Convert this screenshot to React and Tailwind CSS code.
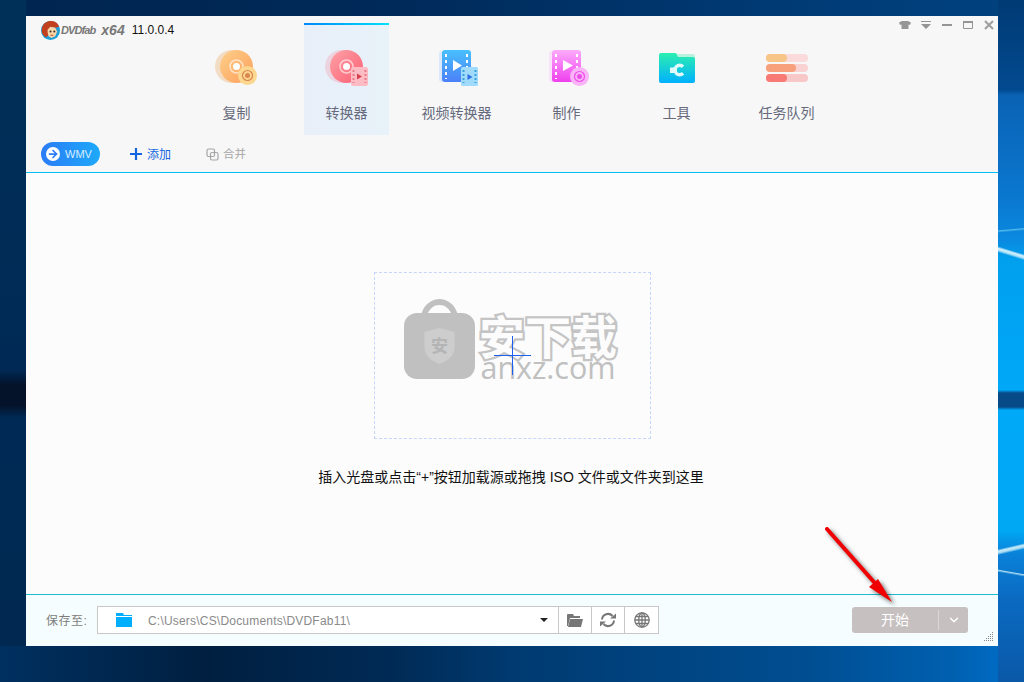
import React from 'react';
import { ChevronDown, ArrowRight } from 'lucide-react';

const cjk = { fontFamily: '"Liberation Sans", "Noto Sans CJK SC", sans-serif' };

const CopyIcon = () => (
  <svg width="48" height="40" viewBox="-2.500 -1 48 40" className="shrink-0">
    <defs>
      <linearGradient id="cp" x1="0" y1="0" x2="1" y2="1"><stop offset="0" stopColor="#fdd08a" /><stop offset="1" stopColor="#fd9f5c" /></linearGradient>
    </defs>
    <circle cx="17" cy="16.500" r="16.500" fill="#f3dcc4" />
    <circle cx="22" cy="16.500" r="16.500" fill="url(#cp)" />
    <circle cx="22" cy="16.500" r="6.500" fill="none" stroke="#fff" strokeOpacity="0.6" strokeWidth="1.500" />
    <circle cx="22" cy="16.500" r="3.500" fill="#fff" />
    <circle cx="33" cy="25.500" r="9.500" fill="#fcd78f" />
    <circle cx="33" cy="25.500" r="5" fill="none" stroke="#d9874e" strokeWidth="1.200" />
    <circle cx="33" cy="25.500" r="2.500" fill="#d9874e" />
  </svg>
);

const ConvertIcon = () => (
  <svg width="48" height="40" viewBox="-2.500 -1 48 40" className="shrink-0">
    <defs>
      <linearGradient id="cv" x1="0" y1="0" x2="1" y2="1"><stop offset="0" stopColor="#fea2a8" /><stop offset="1" stopColor="#fb5f72" /></linearGradient>
    </defs>
    <circle cx="17" cy="16.500" r="16.500" fill="#ecd3e0" />
    <circle cx="22" cy="16.500" r="16.500" fill="url(#cv)" />
    <circle cx="22" cy="16.500" r="6.500" fill="none" stroke="#fff" strokeOpacity="0.6" strokeWidth="1.500" />
    <circle cx="22" cy="16.500" r="3.500" fill="#fff" />
    <rect x="26.500" y="17" width="17" height="19" rx="2" fill="#fdbcc4" />
    <path d="M32.500 23.500l5 3-5 3z" fill="#d8404f" />
    <path d="M29 20v13M41 20v13" stroke="#ea7a88" strokeWidth="2" strokeDasharray="2 2" />
  </svg>
);

const VideoIcon = () => (
  <svg width="48" height="40" viewBox="-6 -1 48 40" className="shrink-0">
    <defs>
      <linearGradient id="vd" x1="0" y1="0" x2="0" y2="1"><stop offset="0" stopColor="#48c0fd" /><stop offset="1" stopColor="#4b80f8" /></linearGradient>
    </defs>
    <rect x="1" y="1" width="26" height="31" rx="3" fill="#dbe8fb" />
    <rect x="4" y="0" width="29" height="32" rx="3" fill="url(#vd)" />
    <path d="M8 4v25M29 4v25" stroke="#fff" strokeWidth="2" strokeDasharray="3 3" />
    <path d="M15 10l9 5.500-9 5.500z" fill="#fff" />
    <rect x="23" y="17" width="17" height="19" rx="1.500" fill="#a0dbfb" />
    <path d="M29.500 24l5 3-5 3z" fill="#2f6ee0" />
    <path d="M25.500 20v13M37.500 20v13" stroke="#3aa0dc" strokeWidth="2" strokeDasharray="2 2" />
  </svg>
);

const MakeIcon = () => (
  <svg width="48" height="40" viewBox="-7 -1 48 40" className="shrink-0">
    <defs>
      <linearGradient id="mk" x1="0" y1="0" x2="0" y2="1"><stop offset="0" stopColor="#fdabfb" /><stop offset="1" stopColor="#ee40ee" /></linearGradient>
    </defs>
    <rect x="0" y="1" width="26" height="31" rx="3" fill="#f8e2f8" />
    <rect x="3" y="0" width="29" height="32" rx="3" fill="url(#mk)" />
    <path d="M7 4v25M28 4v25" stroke="#fff" strokeWidth="2" strokeDasharray="3 3" />
    <path d="M14 10l10 5.500-10 5.500z" fill="#fff" />
    <circle cx="30.500" cy="26.500" r="9.500" fill="#f9b4f7" />
    <circle cx="30.500" cy="26.500" r="5" fill="none" stroke="#ec4fe8" strokeWidth="1.200" />
    <circle cx="30.500" cy="26.500" r="2.500" fill="#ec4fe8" />
  </svg>
);

const ToolIcon = () => (
  <svg width="48" height="40" viewBox="-6 -3 48 40" className="shrink-0">
    <defs>
      <linearGradient id="tl" x1="0" y1="0" x2="0" y2="1"><stop offset="0" stopColor="#2cefb0" /><stop offset="1" stopColor="#00b0fd" /></linearGradient>
    </defs>
    <path d="M17 2h18a2 2 0 0 1 2 2v4H17z" fill="#b8f2dc" />
    <path d="M1 3a2 2 0 0 1 2-2h14a2 2 0 0 1 2 2l1 2h15a2 2 0 0 1 2 2v22a2 2 0 0 1-2 2H3a2 2 0 0 1-2-2z" fill="url(#tl)" />
    <rect x="12" y="15.500" width="7" height="5.500" fill="#e0fafc" />
    <path d="M25 14.700A4.700 4.700 0 1 0 25 21.300" fill="none" stroke="#e0fafc" strokeWidth="3.400" />
  </svg>
);

const QueueIcon = () => (
  <svg width="48" height="40" viewBox="0 -1 48 40" className="shrink-0">
    <rect x="4" y="4" width="42" height="8" rx="4" fill="#fadada" />
    <rect x="4" y="4" width="21" height="8" rx="4" fill="#f6c587" />
    <rect x="4" y="14" width="42" height="8" rx="4" fill="#f9d2d2" />
    <rect x="4" y="14" width="30" height="8" rx="4" fill="#f8a07c" />
    <rect x="4" y="24" width="42" height="8" rx="4" fill="#f8c8c8" />
    <rect x="4" y="24" width="21" height="8" rx="4" fill="#f87a74" />
  </svg>
);

const tabs = [
  { label: '复制', icon: CopyIcon },
  { label: '转换器', icon: ConvertIcon, active: true },
  { label: '视频转换器', icon: VideoIcon },
  { label: '制作', icon: MakeIcon },
  { label: '工具', icon: ToolIcon },
  { label: '任务队列', icon: QueueIcon },
];

const Logo = () => (
  <svg width="19" height="19" viewBox="0 0 20 20" className="shrink-0">
    <circle cx="10" cy="10" r="10" fill="#1c9fd8" />
    <path d="M1 12C0 6 3 1 9 0c5-.5 9 2 10 6l-4 1-5-1-3 4 1 5-3 2c-2-1-3-3-4-5z" fill="#c2401e" />
    <path d="M7 9l3-3 5 1 2 4-2 5-4 2-3-2-1-4z" fill="#fbd5a8" />
    <circle cx="10" cy="11" r="1.100" fill="#333" />
    <circle cx="14" cy="11" r="1.100" fill="#333" />
    <path d="M10 15h3" stroke="#b8452a" />
  </svg>
);

const WinControls = () => (
  <div className="flex items-start gap-[7px] pt-[3px]">
    <svg width="14" height="12" viewBox="0 0 14 12"><path d="M4 2h6l3 1.500L12 6l-1.500-.5V10h-7V5.500L2 6 1 3.500z" fill="#959595" /></svg>
    <svg width="14" height="12" viewBox="0 0 14 12"><path d="M2 2h10v1H2zM2 5h10L7 10z" fill="#959595" /></svg>
    <svg width="14" height="12" viewBox="0 0 14 12"><rect x="2" y="5" width="10" height="2" fill="#959595" /></svg>
    <svg width="14" height="12" viewBox="0 0 14 12"><path d="M2.500 2.500h9v7h-9z" fill="none" stroke="#959595" /><rect x="2" y="2" width="10" height="2" fill="#959595" /></svg>
    <svg width="14" height="12" viewBox="0 0 14 12"><path d="M3 2l8 8M11 2l-8 8" stroke="#a0a0a0" strokeWidth="2.200" /></svg>
  </div>
);

const Watermark = () => (
  <div className="absolute left-[29px] top-[26px] flex items-start gap-[4px] pointer-events-none">
    <svg width="71" height="80" viewBox="0 0 71 80" className="shrink-0">
      <path d="M17 16C20 5 28 0 35.500 0S51 5 54 16h-6c-3-7-7-10-12.500-10S26 9 23 16z" fill="#c0c0c0" />
      <rect x="0" y="14" width="71" height="66" rx="13" fill="#c0c0c0" />
      <path d="M35.500 29l15 4v15c0 9-7 14-15 17-8-3-15-8-15-17V33z" fill="#cdcdcd" />
      <text x="35.500" y="53" textAnchor="middle" fontSize="17" fontWeight="700" fill="#b4b4b4" fontFamily="Noto Sans CJK SC">安</text>
    </svg>
    <div className="flex flex-col items-center pt-[10px]">
      <div className="text-[46px] leading-[50px] font-bold text-[#fcfcfc] [-webkit-text-stroke:4.500px_#c4c4c4] [paint-order:stroke_fill] whitespace-nowrap" style={{ fontFamily: '"Noto Sans CJK SC", sans-serif' }}>安下载</div>
      <div className="text-[30.500px] leading-[24px] -mt-[4px] text-[#c0c0c0] whitespace-nowrap" style={{ fontFamily: '"Open Sans", sans-serif' }}>anxz.com</div>
    </div>
  </div>
);

export default function App() {
  return (
    <div
      className="relative w-[1024px] h-[682px] overflow-hidden pt-[16px] pl-[26px] [background:linear-gradient(197deg,transparent_0,transparent_243px,#d6f0fb_245px,#a8e0f8_247px,transparent_249px,transparent_100%)_right_top/26px_100%_no-repeat,linear-gradient(175deg,transparent_0,transparent_229px,#50b8ec_230px,transparent_232px,transparent_100%)_right_top/26px_100%_no-repeat,linear-gradient(167deg,transparent_0,transparent_535px,#c8ecf8_537px,#a0d8f4_539px,transparent_541px,transparent_100%)_right_top/26px_100%_no-repeat,linear-gradient(190deg,transparent_0,transparent_565px,#a8dcf4_566px,transparent_568px,transparent_100%)_right_top/26px_100%_no-repeat,linear-gradient(180deg,#013a74_0,#024a90_90px,#0a62b4_95px,#0a78d0_200px,#0a8ae0_240px,#00a0ee_260px,#00a8f8_390px,#064a88_393px,#064a88_407px,#00a8f8_410px,#00a8f4_530px,#0a80d8_555px,#0a6ac0_600px,#0a58a8_100%)_right_top/26px_100%_no-repeat,linear-gradient(90deg,#003060_0,#001f40_20%,#002a55_38%,#003a70_50%,#004d90_78%,#0060b0_93%,#0070cc_100%)_left_bottom/100%_36px_no-repeat,linear-gradient(180deg,#003058_0,#002a55_370px,#04122a_385px,#04122a_405px,#002a55_418px,#002850_100%)_left_top/26px_100%_no-repeat,linear-gradient(90deg,#00254f_0,#002a5a_40%,#003a74_75%,#00427f_100%)]"
      style={cjk}
    >
      <div className="w-[972px] h-[630px] flex flex-col bg-[#fcfcfc]">
        {/* Header */}
        <div className="h-[157px] shrink-0 bg-[#f7f7f7] border-b border-[#00c0f4] flex flex-col">
          <div className="flex h-[119px]">
            <div className="w-[168px] shrink-0 pl-[15px] pt-[5px] flex items-start">
              <div className="flex items-center h-[19px]">
                <Logo />
                <span className="text-[11px] font-bold italic text-[#777] ml-[1px] tracking-[-0.9px]">DVDfab</span>
                <span className="text-[14px] font-bold italic text-[#777] ml-[6px] -mt-[1px]">x64</span>
                <span className="text-[12px] text-[#111] ml-[7px] -mt-[1px]">11.0.0.4</span>
              </div>
            </div>
            <div className="flex gap-[25px] pt-[7px]">
              {tabs.map(t => (
                <div
                  key={t.label}
                  className={
                    t.active
                      ? "relative w-[85px] h-[112px] bg-[linear-gradient(90deg,#e8eff9,#e8f2f9)] flex flex-col items-center pt-[26px]"
                      : "relative w-[85px] h-[112px] flex flex-col items-center pt-[26px]"
                  }
                >
                  {t.active && <div className="absolute left-0 top-0 w-full h-[2px] bg-[linear-gradient(90deg,#0088f8,#00e0f8)]"></div>}
                  <div className="h-[40px] flex justify-center w-[48px] -ml-[2px]"><t.icon /></div>
                  <div className="mt-[14px] text-[14px] leading-[20px] text-[#666a7c] whitespace-nowrap">{t.label}</div>
                </div>
              ))}
            </div>
            <div className="ml-auto pr-[2px]"><WinControls /></div>
          </div>
          {/* Toolbar */}
          <div className="flex items-center h-[37px] pl-[15px] pt-[1px]">
            <div className="w-[59px] h-[24px] rounded-full bg-[linear-gradient(90deg,#2b7cf6,#1ea9fa)] flex items-center pl-[5px] gap-[5px]">
              <span className="w-[14px] h-[14px] rounded-full bg-white flex items-center justify-center">
                <ArrowRight size={12} strokeWidth={3.500} className="text-[#2b7cf6]" />
              </span>
              <span className="text-[11px] text-[#d8eefd]">WMV</span>
            </div>
            <div className="flex items-center ml-[30px] text-[#1466e0] text-[12px] gap-[5px]">
              <svg width="12" height="12" viewBox="0 0 12 12" stroke="#1466e0" strokeWidth="2.200"><path d="M0 6h12M6 0v12" /></svg>
              <span className="pt-[1px]">添加</span>
            </div>
            <div className="flex items-center ml-[35px] text-[#a6a6a6] text-[11.500px] gap-[4px]">
              <svg width="13" height="13" viewBox="0 0 13 13" fill="none" stroke="#a6a6a6" strokeWidth="1.200">
                <rect x="1" y="1" width="7.500" height="7.500" rx="1.500" />
                <rect x="4.500" y="4.500" width="7.500" height="7.500" rx="1.500" />
              </svg>
              <span className="pt-[1px]">合并</span>
            </div>
          </div>
        </div>

        {/* Drop area */}
        <div className="flex-1 flex flex-col items-center pt-[99px]">
          <div className="relative w-[277px] h-[167px] border border-dashed border-[#c6d6fb] ml-[1px]">
            <Watermark />
            <div className="absolute left-[119px] top-[82px] w-[37px] h-[1px] bg-[#1a5ff0]"></div>
            <div className="absolute left-[137px] top-[63px] w-[1px] h-[39px] bg-[#1a5ff0]"></div>
          </div>
          <div className="mt-[28px] -ml-[2px] text-[14px] leading-[20px] text-[#111] whitespace-nowrap">插入光盘或点击“+”按钮加载源或拖拽 ISO 文件或文件夹到这里</div>
        </div>

        {/* Footer */}
        <div className="relative h-[52px] shrink-0 bg-[#f6fdfe] border-t border-[#1cbccc] flex items-center pl-[20px] pr-[30px]">
          <span className="text-[12px] text-[#7d7d7d] w-[51px] tracking-[0.5px]">保存至:</span>
          <div className="flex h-[28px] -mt-[1px] border border-[#c8c8c8] bg-white w-[562px]">
            <div className="w-[462px] flex items-center pl-[18px] border-r border-[#c8c8c8]">
              <svg width="16" height="14" viewBox="0 0 16 14" className="shrink-0"><path d="M0 0h7l1 2h8v1H0zM0 4h16v10H0z" fill="#00aeff" /></svg>
              <span className="ml-[16px] pt-[2px] text-[12px] tracking-[0.2px] text-[#8a8a8a] flex-1">C:\Users\CS\Documents\DVDFab11\</span>
              <span className="w-0 h-0 border-x-[4px] border-x-transparent border-t-[4px] border-t-[#222] mr-[10px]"></span>
            </div>
            <div className="w-[33px] flex items-center justify-center border-r border-[#c8c8c8]">
              <svg width="16" height="14" viewBox="0 0 16 14"><path d="M0 2a1 1 0 0 1 1-1h5l1 2h6v2H3L1 13H0z" fill="#777" /><path d="M3 6h13l-2 8H1z" fill="#777" /></svg>
            </div>
            <div className="w-[33px] flex items-center justify-center border-r border-[#c8c8c8]">
              <svg width="18" height="16" viewBox="0 0 18 16" fill="none" stroke="#777" strokeWidth="2">
                <path d="M3 7.500A6 6 0 0 1 13.500 4" />
                <path d="M15 8.500A6 6 0 0 1 4.500 12" />
                <path d="M11 6.500h6v-5z" fill="#777" stroke="none" />
                <path d="M7 9.500H1v5z" fill="#777" stroke="none" />
              </svg>
            </div>
            <div className="w-[33px] flex items-center justify-center">
              <svg width="16" height="16" viewBox="0 0 16 16" fill="none" stroke="#777" strokeWidth="1.300">
                <circle cx="8" cy="8" r="7.200" />
                <ellipse cx="8" cy="8" rx="3.300" ry="7.200" />
                <path d="M8 .8v14.400M.8 8h14.400M1.800 4.500h12.400M1.800 11.500h12.400" />
              </svg>
            </div>
          </div>
          <div className="ml-auto w-[116px] h-[26px] rounded-[3px] bg-[#c6c0c0] flex items-center -mt-[1px]">
            <div className="w-[86px] text-center text-[14px] text-white">开始</div>
            <div className="w-px h-[20px] bg-[#dcd8d8]"></div>
            <div className="flex-1 flex justify-center"><ChevronDown size={14} strokeWidth={2.500} className="text-white" /></div>
          </div>
          <svg width="10" height="10" viewBox="0 0 10 10" className="absolute right-[4px] bottom-[4px]" fill="#888">
            <rect x="8" y="0" width="1" height="1" /><rect x="6" y="2" width="1" height="1" /><rect x="8" y="2" width="1" height="1" />
            <rect x="4" y="4" width="1" height="1" /><rect x="6" y="4" width="1" height="1" /><rect x="8" y="4" width="1" height="1" />
            <rect x="2" y="6" width="1" height="1" /><rect x="4" y="6" width="1" height="1" /><rect x="6" y="6" width="1" height="1" /><rect x="8" y="6" width="1" height="1" />
            <rect x="0" y="8" width="1" height="1" /><rect x="2" y="8" width="1" height="1" /><rect x="4" y="8" width="1" height="1" /><rect x="6" y="8" width="1" height="1" /><rect x="8" y="8" width="1" height="1" />
          </svg>
        </div>
      </div>

      {/* Red annotation arrow */}
      <svg width="90" height="90" viewBox="0 0 90 90" className="absolute left-[820px] top-[522px] pointer-events-none drop-shadow-[3px_3px_2px_rgba(0,0,0,0.55)]">
        <path d="M7 7L61 68" stroke="#f00000" strokeWidth="4" strokeLinecap="round" />
        <path d="M72 80L49 65l9-8z" fill="#f00000" />
      </svg>
    </div>
  );
}
